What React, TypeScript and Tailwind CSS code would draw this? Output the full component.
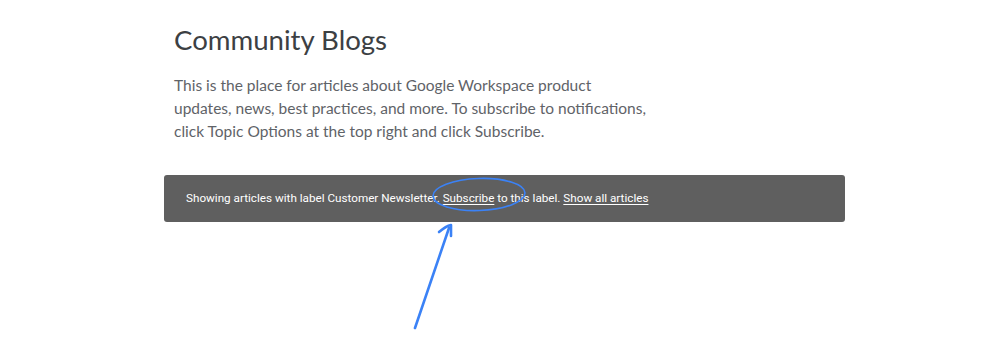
export default function App() {
  return (
    <div className="relative h-[337px] w-[999px] overflow-hidden bg-white">
      <div className="ml-[164px] w-[681px] pt-[22px]">
        <h1 className="pl-[10px] font-['Lato',sans-serif] text-[27.6px] leading-[36px] text-[#3c4043]">
          Community Blogs
        </h1>
        <p className="mt-[16px] pl-[10px] font-['Lato',sans-serif] text-[15.5px] leading-[23px] text-[#5f6368]">
          This is the place for articles about Google Workspace product
          <br />
          updates, news, best practices, and more. To subscribe to notifications,
          <br />
          click Topic Options at the top right and click Subscribe.
        </p>
        <div className="mt-[32px] flex h-[47px] items-center rounded-[3px] bg-[#5f5f5f] px-[22px] font-['Roboto',sans-serif] text-[11.7px] text-white">
          <span>
            Showing articles with label Customer Newsletter.{" "}
            <a className="underline underline-offset-2">Subscribe</a> to this label.{" "}
            <a className="underline underline-offset-2">Show all articles</a>
          </span>
        </div>
      </div>
      <svg className="pointer-events-none absolute left-0 top-0" width="999" height="337" viewBox="0 0 999 337">
        <ellipse cx="479" cy="194.5" rx="46" ry="16" fill="none" stroke="#3b82f6" strokeWidth="1.6" transform="rotate(-2 479 194.5)" />
        <path d="M415 328 L449 228" fill="none" stroke="#3b82f6" strokeWidth="2.6" strokeLinecap="round" />
        <path d="M439 232 Q446 226 451 225 Q451 230 451 236" fill="none" stroke="#3b82f6" strokeWidth="2.6" strokeLinecap="round" strokeLinejoin="round" />
      </svg>
    </div>
  );
}
